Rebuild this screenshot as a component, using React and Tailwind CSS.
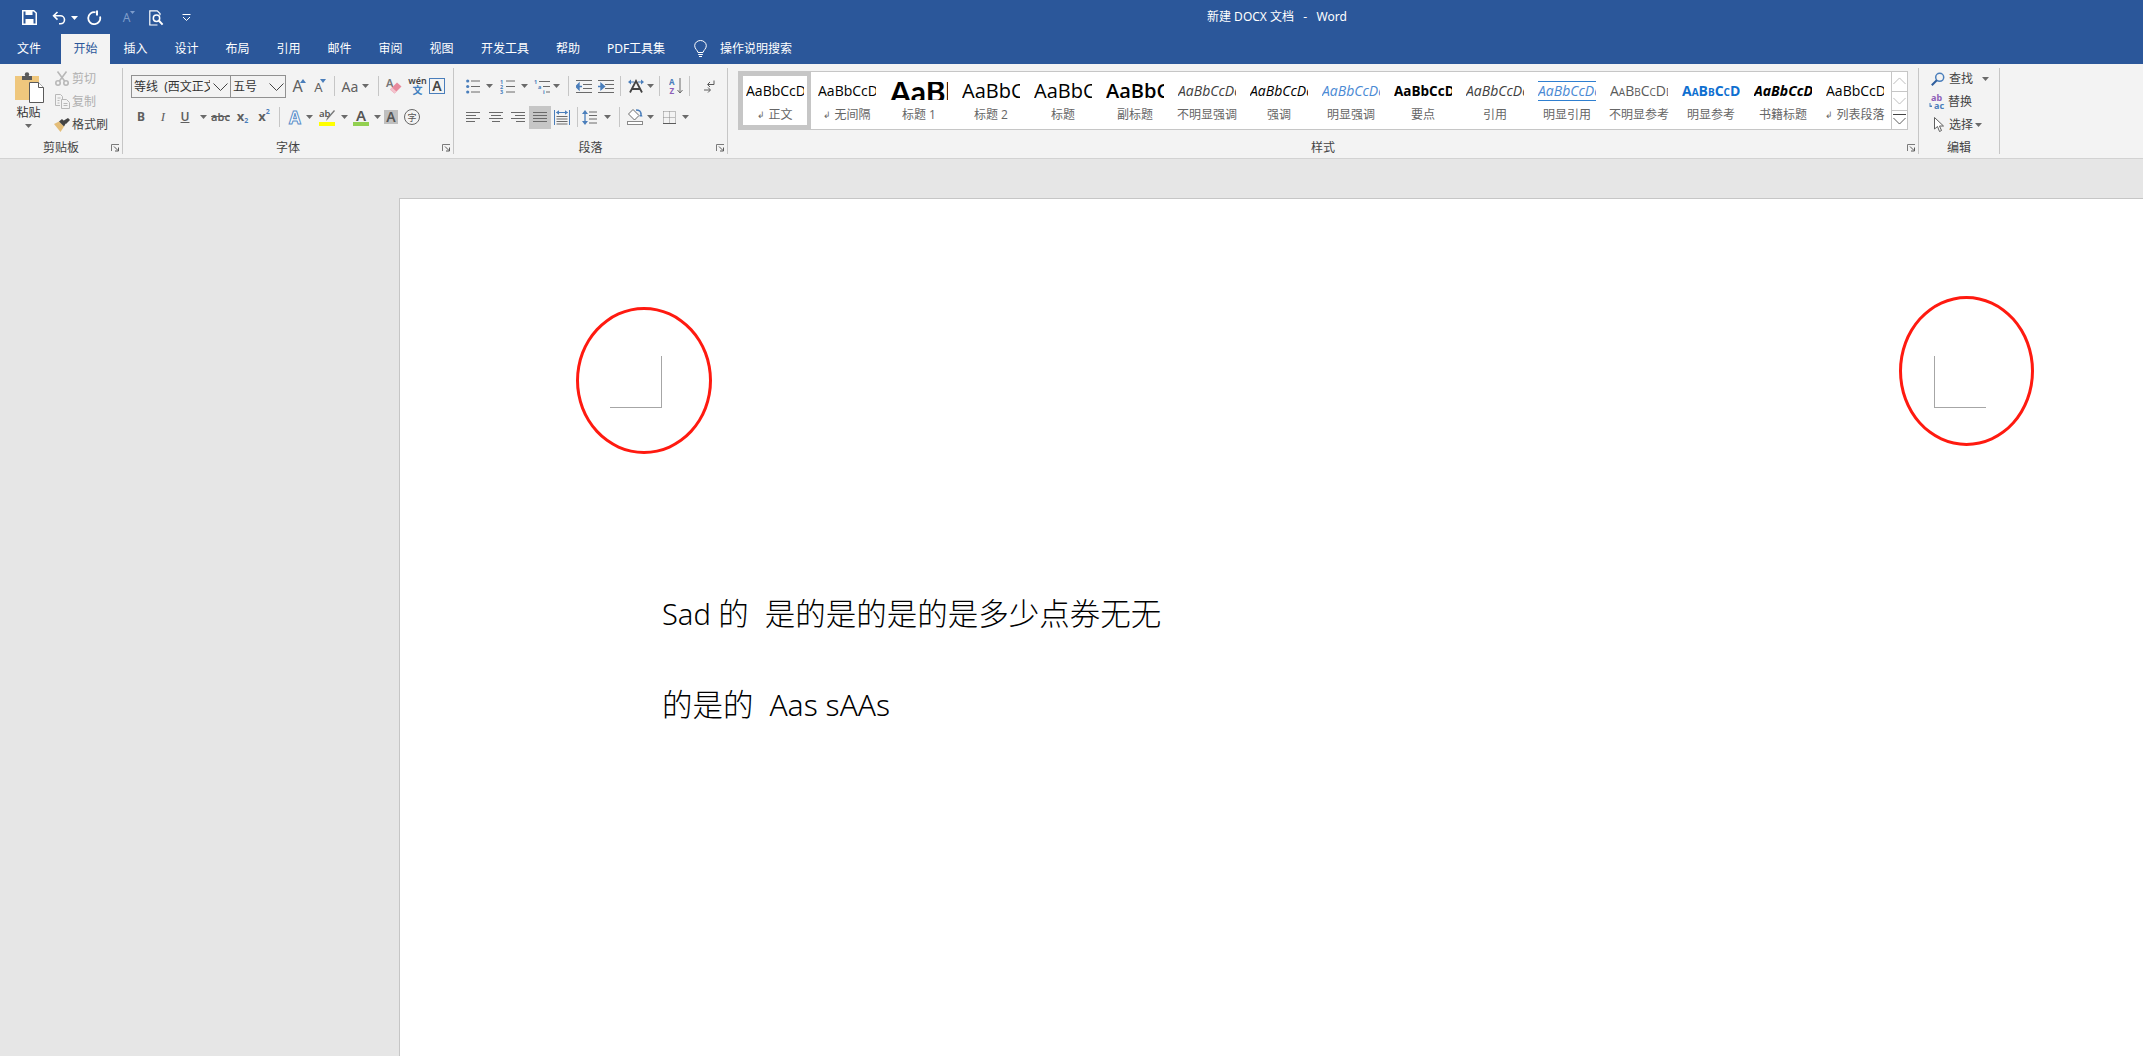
import React from 'react';

const BLUE = '#4a7ebb';

const C = ({ className = '', children }) => (
  <div className={`flex shrink-0 items-center justify-center ${className}`}>{children}</div>
);

const Caret = ({ color = '#6a6a6a' }) => (
  <svg width="7" height="4" viewBox="0 0 7 4" className="shrink-0"><path d="M0 0h7L3.5 4z" fill={color} /></svg>
);

const Sep = () => <div className="h-[20px] w-px bg-[#c6c6c6]" />;

const Launcher = () => (
  <svg width="9" height="8" viewBox="0 0 9 8" className="shrink-0">
    <path d="M.5 7V.5H8" fill="none" stroke="#7a7a7a" />
    <path d="M3 2.5L7 6.5M7.5 3.5v3.5H4" fill="none" stroke="#5a5a5a" />
  </svg>
);

const Chevron = ({ color = '#555', up = false, w = 15 }) => (
  <svg width={w} height="8" viewBox="0 0 15 8" className="shrink-0">
    <path d={up ? 'M.5 7.5L7.5.5l7 7' : 'M.5.5l7 7 7-7'} fill="none" stroke={color} />
  </svg>
);

/* quick access toolbar */
const SaveIcon = () => (
  <svg width="15" height="15" viewBox="0 0 15 15">
    <path d="M.75.75h11L14.25 3v11.25H.75z" fill="none" stroke="#fff" strokeWidth="1.5" />
    <rect x="3.5" y="1" width="7" height="4" fill="#fff" />
    <rect x="3.5" y="9" width="8" height="5" fill="#fff" />
  </svg>
);

const UndoIcon = () => (
  <svg width="15" height="14" viewBox="0 0 15 14" fill="none" stroke="#fff" strokeWidth="1.6">
    <path d="M5.5 1L1.6 4.8l3.9 3.8M2 4.8h6.5a4 4 0 0 1 0 8H7" />
  </svg>
);

const RedoIcon = () => (
  <svg width="15" height="15" viewBox="0 0 15 15" fill="none" stroke="#fff" strokeWidth="1.8">
    <path d="M8.5 2.3A6 6 0 1 0 13 6.5" />
    <path d="M10 .5v5" strokeWidth="2" />
  </svg>
);

const PreviewIcon = () => (
  <svg width="15" height="16" viewBox="0 0 15 16" fill="none" stroke="#fff" strokeWidth="1.2">
    <path d="M8.5 15H.8V.8h7.4L11 3.6v1.6" />
    <circle cx="7.5" cy="8.2" r="3.2" strokeWidth="1.5" />
    <path d="M10 10.8l3.6 3.8" strokeWidth="2" />
  </svg>
);

const CustomizeIcon = () => (
  <svg width="9" height="7" viewBox="0 0 9 7" fill="none" stroke="#fff">
    <path d="M.5.5h8" />
    <path d="M1 3l3.5 3.5L8 3" />
  </svg>
);

const BulbIcon = () => (
  <svg width="13" height="18" viewBox="0 0 13 18" fill="none" stroke="#fff">
    <path d="M4 12.5C3.5 10 .7 9 .7 5.7a5.8 5.2 0 0 1 11.6 0C12.3 9 9.5 10 9 12.5z" />
    <path d="M4.2 14.5h4.6M5 16.5h3" />
  </svg>
);

/* clipboard */
const PasteIcon = () => (
  <svg width="30" height="31" viewBox="0 0 30 31">
    <path d="M0 4h24v24H0z" fill="#efc77d" />
    <path d="M7 4h10v4H7z" fill="#5a5a5a" />
    <circle cx="12" cy="2.5" r="2.2" fill="#5a5a5a" />
    <path d="M14.5 10.5h9l5 5v15h-14z" fill="#fff" stroke="#5a5a5a" />
    <path d="M23.5 10.5v5h5" fill="#fff" stroke="#5a5a5a" />
  </svg>
);

const CutIcon = () => (
  <svg width="14" height="15" viewBox="0 0 14 15" fill="none" stroke="#b8b8b8" strokeWidth="1.6">
    <circle cx="3" cy="12" r="2.2" />
    <circle cx="11" cy="12" r="2.2" />
    <path d="M9.6 10L2.5.5M4.4 10L11.5.5" />
  </svg>
);

const CopyIcon = () => (
  <svg width="15" height="15" viewBox="0 0 15 15" fill="none" stroke="#b8b8b8">
    <path d="M5 11.5H.5V.5h5l2 2V5" />
    <path d="M6.5 5.5h5l3 3v6h-8z" />
    <path d="M2.5 4h3M2.5 6.5h2M2.5 9h2M8.5 9.5h4M8.5 11.5h4" />
  </svg>
);

const BrushIcon = () => (
  <svg width="16" height="14" viewBox="0 0 16 14">
    <path d="M0 6l5-2.5 5 5L6.5 14z" fill="#e4bd78" />
    <path d="M5 3.5L8 1l4 4-2 3.5z" fill="#444" />
    <path d="M9 3l5-3 2 2-4 4z" fill="#444" />
  </svg>
);

/* font */
const SmallTriangle = ({ down = false }) => (
  <svg width="6" height="4" viewBox="0 0 6 4" className="mb-[11px] -ml-[3px] shrink-0">
    <path d={down ? 'M0 0h6L3 4z' : 'M0 4h6L3 0z'} fill={BLUE} />
  </svg>
);

const EraserIcon = () => (
  <div className="flex h-[18px] w-[17px] items-start">
    <span className="text-[11px] leading-none font-semibold text-[#777]">A</span>
    <svg width="12" height="12" viewBox="0 0 12 12" className="mt-[5px] -ml-[3px] shrink-0">
      <path d="M0 7.5L7 .5 11.5 4.5l-7 7z" fill="#e8899c" />
      <path d="M0 7.5l2-2 4.5 4-2 2z" fill="#f3c3cd" />
    </svg>
  </div>
);

const PinyinIcon = () => (
  <div className="flex flex-col items-center leading-none">
    <span className="text-[9px] leading-[9px] font-semibold text-[#444]">wén</span>
    <span className="text-[10px] leading-[11px] font-semibold text-[#3f7fbf]">文</span>
  </div>
);

const GlowA = () => (
  <span className="text-[17px] leading-none font-bold text-white [-webkit-text-stroke:1px_#5b8fc9]">A</span>
);

const HighlightIcon = () => (
  <div className="flex flex-col items-center">
    <svg width="16" height="13" viewBox="0 0 16 13">
      <text x="0" y="8" fontSize="9.5" fontWeight="600" fill="#555">ab</text>
      <path d="M7 12l1-3 7-8 1 1-7 8z" fill="#777" />
    </svg>
    <div className="h-[4px] w-[16px] bg-[#ffff00]" />
  </div>
);

const FontColorIcon = () => (
  <div className="flex flex-col items-center">
    <span className="text-[15px] leading-[13px] font-semibold text-[#555]">A</span>
    <div className="h-[4px] w-[16px] bg-[#92d050]" />
  </div>
);

/* paragraph */
const Lines = ({ x = 5, w = 9, ys = [2, 7.5, 13], color = '#6a6a6a' }) => (
  <path d={ys.map((y) => `M${x} ${y}h${w}`).join('')} stroke={color} fill="none" />
);

const BulletsIcon = () => (
  <svg width="14" height="15" viewBox="0 0 14 15">
    <circle cx="1.7" cy="2" r="1.6" fill={BLUE} />
    <circle cx="1.7" cy="7.5" r="1.6" fill={BLUE} />
    <circle cx="1.7" cy="13" r="1.6" fill={BLUE} />
    <Lines />
  </svg>
);

const NumberIcon = () => (
  <svg width="15" height="15" viewBox="0 0 15 15">
    <text x="0" y="5" fontSize="5.5" fontWeight="700" fill={BLUE}>1</text>
    <text x="0" y="10" fontSize="5.5" fontWeight="700" fill={BLUE}>2</text>
    <text x="0" y="15" fontSize="5.5" fontWeight="700" fill={BLUE}>3</text>
    <Lines x={6} />
  </svg>
);

const MultiIcon = () => (
  <svg width="16" height="15" viewBox="0 0 16 15">
    <text x="0" y="5" fontSize="5.5" fontWeight="700" fill={BLUE}>1</text>
    <text x="4" y="10" fontSize="5.5" fontWeight="700" fill={BLUE}>a</text>
    <text x="9" y="15" fontSize="5.5" fontWeight="700" fill={BLUE}>i</text>
    <path d="M5 2.5h11M9 7.5h7M12 13h4" stroke="#6a6a6a" />
  </svg>
);

const IndentIcon = ({ inc = false }) => (
  <svg width="16" height="13" viewBox="0 0 16 13">
    <path d="M0 .5h16M7 4.5h9M7 8.5h9M0 12.5h16" stroke="#6a6a6a" />
    <path d={inc ? 'M0 6.5h3M3 3.5l3.5 3-3.5 3z' : 'M6 6.5H3M3 3.5L0 6.5l3 3z'} stroke={BLUE} strokeWidth="1.4" fill={BLUE} />
  </svg>
);

const AsianLayoutIcon = () => (
  <svg width="16" height="14" viewBox="0 0 16 14">
    <path d="M0 3l3-2.5v5zM16 3l-3-2.5v5z" fill={BLUE} />
    <path d="M3 3h3M10 3h3" stroke={BLUE} />
    <path d="M2 13.5L8 2l6 11.5M4.5 10h7" fill="none" stroke="#444" strokeWidth="1.8" />
  </svg>
);

const SortIcon = () => (
  <svg width="14" height="16" viewBox="0 0 14 16">
    <text x="0" y="7" fontSize="8" fontWeight="700" fill={BLUE}>A</text>
    <text x="0.5" y="15.5" fontSize="8" fontWeight="700" fill="#8e5fb8">Z</text>
    <path d="M11 0v15M8.5 12l2.5 3 2.5-3" fill="none" stroke="#6a6a6a" />
  </svg>
);

const MarksIcon = () => (
  <svg width="11" height="13" viewBox="0 0 11 13" fill="none">
    <path d="M10 .5v4H4M6 2L3.5 4.5 6 7" stroke="#5a5a5a" />
    <path d="M0 10h6M4 7.5L6.5 10 4 12.5" stroke="#5a5a5a" />
  </svg>
);

const AlignIcon = ({ rows }) => (
  <svg width="14" height="10" viewBox="0 0 14 10">
    <path d={rows} stroke="#6a6a6a" fill="none" />
  </svg>
);

const DistributeIcon = () => (
  <svg width="16" height="15" viewBox="0 0 16 15">
    <path d="M.5 0v15M15.5 0v15" stroke={BLUE} />
    <path d="M2.5 2.5h11" stroke={BLUE} />
    <path d="M2 2.5L5 .3v4.4zM14 2.5L11 .3v4.4z" fill={BLUE} />
    <path d="M2.5 6.5h11M2.5 9h11M2.5 11.5h11M2.5 14h11" stroke="#6a6a6a" />
  </svg>
);

const LineSpacingIcon = () => (
  <svg width="15" height="15" viewBox="0 0 15 15">
    <path d="M3 2v11" stroke={BLUE} strokeWidth="1.3" />
    <path d="M0 4l3-4 3 4zM0 11l3 4 3-4z" fill={BLUE} />
    <path d="M7 2h8M7 5.5h8M7 9h8M7 13h8" stroke="#6a6a6a" />
  </svg>
);

const ShadingIcon = () => (
  <svg width="16" height="16" viewBox="0 0 16 16">
    <path d="M6 .5l6 6-4.5 4.5-6-6z" fill="#fff" stroke="#6a6a6a" />
    <path d="M9 1c3 0 5 1.5 5 4" fill="none" stroke={BLUE} strokeWidth="1.4" />
    <path d="M14 3.5l1.5 4h-3z" fill={BLUE} />
    <rect x=".5" y="12.5" width="15" height="3" fill="#fff" stroke="#8a8a8a" />
  </svg>
);

const BordersIcon = () => (
  <svg width="13" height="13" viewBox="0 0 13 13">
    <path d="M.5.5h12M.5 6.5h12M.5.5v12M6.5.5v12M12.5.5v12" stroke="#8a8a8a" strokeDasharray="1 1" fill="none" />
    <path d="M0 12.5h13" stroke="#5a5a5a" />
  </svg>
);

/* editing */
const FindIcon = () => (
  <svg width="14" height="14" viewBox="0 0 14 14" fill="none">
    <circle cx="8.7" cy="5.3" r="4" stroke={BLUE} strokeWidth="1.5" />
    <path d="M5.8 8.2L.8 13.2" stroke="#2f5f9e" strokeWidth="2" />
  </svg>
);

const ReplaceIcon = () => (
  <svg width="16" height="15" viewBox="0 0 16 15">
    <text x="2" y="7" fontSize="9" fontWeight="700" fill="#8e5fb8">ab</text>
    <text x="5" y="15" fontSize="9" fontWeight="700" fill="#4a7ebb">ac</text>
    <path d="M1 9v3.5h2M2.5 11l-1.5 1.5" fill="none" stroke={BLUE} />
  </svg>
);

const CursorIcon = () => (
  <svg width="10" height="15" viewBox="0 0 10 15">
    <path d="M.5.5v11.5l3-2.5 2 5 2-1-2-4.5h4z" fill="#fff" stroke="#5f5f5f" />
  </svg>
);

const styles = [
  { preview: 'AaBbCcDd', cls: 'text-[14px] text-black', label: '正文', mark: true, selected: true },
  { preview: 'AaBbCcDd', cls: 'text-[14px] text-black', label: '无间隔', mark: true },
  { preview: 'AaBbCcDd', cls: "text-[30px] font-bold text-black [font-family:'Lato',sans-serif]", label: '标题 1' },
  { preview: 'AaBbCcDd', cls: 'text-[20px] text-black', label: '标题 2' },
  { preview: 'AaBbCcDd', cls: 'text-[20px] text-black', label: '标题' },
  { preview: 'AaBbCcDd', cls: 'text-[20px] font-semibold text-black', label: '副标题' },
  { preview: 'AaBbCcDd', cls: 'text-[14px] italic text-[#404040]', label: '不明显强调' },
  { preview: 'AaBbCcDd', cls: 'text-[14px] italic text-black', label: '强调' },
  { preview: 'AaBbCcDd', cls: 'text-[14px] italic text-[#4a8ad4]', label: '明显强调' },
  { preview: 'AaBbCcDd', cls: 'text-[13.5px] font-bold text-black', label: '要点' },
  { preview: 'AaBbCcDd', cls: 'text-[14px] italic text-[#404040]', label: '引用' },
  { preview: 'AaBbCcDd', cls: 'text-[14px] italic text-[#4a8ad4] border-y border-[#2f7fd0]', label: '明显引用' },
  { preview: 'AaBbCcDd', cls: 'text-[14px] text-[#5a5a5a] [font-variant:small-caps]', label: '不明显参考' },
  { preview: 'AaBbCcDd', cls: 'text-[14px] font-bold text-[#0f6fd0] [font-variant:small-caps]', label: '明显参考' },
  { preview: 'AaBbCcDd', cls: 'text-[14px] font-bold italic text-black', label: '书籍标题' },
  { preview: 'AaBbCcDd', cls: 'text-[14px] text-black', label: '列表段落', mark: true },
];

const StyleItem = ({ item }) => (
  <div className={`flex h-full w-[72px] shrink-0 flex-col items-center ${item.selected ? 'shadow-[inset_0_0_0_4px_#c6c6c6]' : ''}`}>
    <div className="flex h-[38px] w-[58px] items-center overflow-hidden">
      <span className={`block w-[58px] overflow-hidden leading-[18px] whitespace-nowrap ${item.cls}`}>{item.preview}</span>
    </div>
    <div className="flex h-[10px] items-center text-[12px] whitespace-nowrap text-[#666]">
      {item.mark && <span className="mr-[3px] text-[9px]">↲</span>}
      {item.label}
    </div>
  </div>
);

const Group = ({ className, label, launcher = true, children }) => (
  <div className={`flex h-[86px] shrink-0 flex-col justify-between border-r border-[#c6c6c6] ${className}`}>
    <div className="flex-1">{children}</div>
    <div className="grid h-[14px] grid-cols-[1fr_auto_1fr] items-center pt-[2px] text-[12px] leading-none text-[#444]">
      <span />
      <span>{label}</span>
      {launcher ? (
        <span className="flex justify-end pr-[2px]"><Launcher /></span>
      ) : <span />}
    </div>
  </div>
);

const tabs = [
  ['文件', 'w-[58px] mr-[3px]'],
  ['开始', 'w-[49px] bg-[#f3f3f3] text-[#2b579a]'],
  ['插入', 'w-[51px]'],
  ['设计', 'w-[51px]'],
  ['布局', 'w-[51px]'],
  ['引用', 'w-[51px]'],
  ['邮件', 'w-[51px]'],
  ['审阅', 'w-[51px]'],
  ['视图', 'w-[51px]'],
  ['开发工具', 'w-[76px]'],
  ['帮助', 'w-[50px]'],
  ['PDF工具集', 'w-[86px]'],
];

const SmallButton = ({ icon, label, dim = false }) => (
  <div className={`flex h-[20px] items-center text-[12px] ${dim ? 'text-[#b0b0b0]' : 'text-[#444]'}`}>
    <C className="w-[18px]">{icon}</C>
    <span className="ml-[1px] whitespace-nowrap">{label}</span>
  </div>
);

export default function App() {
  return (
    <div className="flex h-[1056px] w-[2143px] flex-col overflow-hidden bg-[#e6e6e6] [font-family:'Noto_Sans','Noto_Sans_CJK_SC',sans-serif]">
      {/* title bar */}
      <div className="flex h-[34px] shrink-0 items-center bg-[#2b579a] text-white">
        <div className="flex w-[1207px] shrink-0 items-center pt-[1px]">
          <C className="ml-[21px] w-[16px]"><SaveIcon /></C>
          <C className="ml-[14px] w-[16px]"><UndoIcon /></C>
          <C className="ml-[3px] w-[8px]"><Caret color="#fff" /></C>
          <C className="ml-[8px] w-[16px]"><RedoIcon /></C>
          <C className="ml-[19px] w-[16px]">
            <span className="text-[12px] leading-none text-[#7d9ccb]">A</span>
            <svg width="5" height="3" viewBox="0 0 5 3" className="mb-[11px] shrink-0"><path d="M0 0h5L2.5 3z" fill="#7d9ccb" /></svg>
          </C>
          <C className="ml-[11px] w-[16px]"><PreviewIcon /></C>
          <C className="ml-[17px] w-[10px]"><CustomizeIcon /></C>
        </div>
        <span className="text-[12px] whitespace-pre">新建 DOCX 文档   -   Word</span>
      </div>

      {/* tabs */}
      <div className="flex h-[30px] shrink-0 items-stretch bg-[#2b579a] text-[12px] text-white">
        {tabs.map(([name, cls]) => (
          <C key={name} className={cls}>{name}</C>
        ))}
        <C className="ml-[14px] w-[14px]"><BulbIcon /></C>
        <C className="ml-[13px]">操作说明搜索</C>
      </div>

      {/* ribbon */}
      <div className="flex h-[95px] shrink-0 items-center border-b border-[#d2d2d2] bg-[#f3f3f3] pb-px">
        <Group className="w-[123px]" label="剪贴板">
          <div className="flex">
            <div className="flex w-[53px] flex-col items-center pt-[4px] pl-[6px]">
              <PasteIcon />
              <span className="mt-[2px] -ml-[2px] text-[12px] leading-[16px] text-[#333]">粘贴</span>
              <div className="mt-[3px] -ml-[2px]"><Caret /></div>
            </div>
            <div className="flex flex-col gap-[3px] pt-[1px]">
              <SmallButton dim icon={<CutIcon />} label="剪切" />
              <SmallButton dim icon={<CopyIcon />} label="复制" />
              <SmallButton icon={<BrushIcon />} label="格式刷" />
            </div>
          </div>
        </Group>

        <Group className="w-[331px]" label="字体">
          <div className="mt-[7px] flex h-[23px] items-center pl-[8px]">
            <div className="flex h-[23px] w-[100px] shrink-0 items-center border border-[#919191] bg-[#f3f3f3] pt-[1px] pl-[2px] text-[12px] text-[#333]">
              <span className="w-[76px] overflow-hidden whitespace-pre">等线  (西文正文)</span>
              <span className="ml-[3px]"><Chevron color="#444" /></span>
            </div>
            <div className="-ml-px flex h-[23px] w-[56px] shrink-0 items-center border border-[#919191] pt-[1px] pl-[2px] text-[12px] text-[#333]">
              <span className="w-[35px]">五号</span>
              <span className="ml-[1px]"><Chevron color="#444" /></span>
            </div>
            <C className="ml-[5px] w-[16px] items-end"><span className="text-[16px] leading-none text-[#5f5f5f]">A</span><SmallTriangle /></C>
            <C className="ml-[6px] w-[14px] items-end"><span className="text-[13px] leading-none text-[#5f5f5f]">A</span><SmallTriangle down /></C>
            <C className="ml-[7px] w-px"><Sep /></C>
            <C className="ml-[7px] w-[16px] text-[14px] text-[#5f5f5f]">Aa</C>
            <C className="ml-[3px] w-[8px]"><Caret /></C>
            <C className="ml-[9px] w-px"><Sep /></C>
            <C className="ml-[7px] w-[17px]"><EraserIcon /></C>
            <C className="ml-[6px] w-[17px]"><PinyinIcon /></C>
            <C className="ml-[3px] h-[16px] w-[16px] border border-[#4a7ebb] text-[14px] leading-none font-semibold text-[#444]">A</C>
          </div>
          <div className="mt-[8px] flex h-[23px] items-center pl-[7px] text-[#5f5f5f]">
            <C className="w-[22px] text-[12px] font-bold">B</C>
            <C className="w-[22px] text-[13px] italic [font-family:'Liberation_Serif',serif]">I</C>
            <C className="w-[22px] text-[12px] font-semibold underline">U</C>
            <C className="w-[14px]"><Caret /></C>
            <C className="w-[21px] text-[11px] font-semibold line-through">abc</C>
            <C className="w-[23px] items-end text-[13px] font-bold">x<span className="text-[7px] text-[#4a7ebb]">2</span></C>
            <C className="w-[20px] items-start text-[13px] font-bold">x<span className="text-[7px] text-[#4a7ebb]">2</span></C>
            <C className="w-[10px]"><Sep /></C>
            <C className="w-[22px]"><GlowA /></C>
            <C className="w-[7px]"><Caret /></C>
            <C className="w-[28px]"><HighlightIcon /></C>
            <C className="w-[6px]"><Caret /></C>
            <C className="w-[28px]"><FontColorIcon /></C>
            <C className="w-[4px]"><Caret /></C>
            <C className="ml-[5px] h-[14px] w-[14px] bg-[#bfbfbf] text-[14px] leading-none font-semibold text-[#555]">A</C>
            <C className="ml-[6px] h-[16px] w-[16px] rounded-full border border-[#666] text-[9px] leading-none text-[#555]">字</C>
          </div>
        </Group>

        <Group className="w-[274px]" label="段落">
          <div className="mt-[7px] flex h-[23px] items-center pl-[11px]">
            <C className="w-[16px]"><BulletsIcon /></C>
            <C className="ml-[5px] w-[7px]"><Caret /></C>
            <C className="ml-[6px] w-[16px]"><NumberIcon /></C>
            <C className="ml-[6px] w-[7px]"><Caret /></C>
            <C className="ml-[6px] w-[16px]"><MultiIcon /></C>
            <C className="ml-[3px] w-[7px]"><Caret /></C>
            <C className="ml-[8px] w-px"><Sep /></C>
            <C className="ml-[7px] w-[16px]"><IndentIcon /></C>
            <C className="ml-[6px] w-[16px]"><IndentIcon inc /></C>
            <C className="ml-[6px] w-px"><Sep /></C>
            <C className="ml-[7px] w-[16px]"><AsianLayoutIcon /></C>
            <C className="ml-[3px] w-[7px]"><Caret /></C>
            <C className="ml-[5px] w-px"><Sep /></C>
            <C className="ml-[8px] w-[16px]"><SortIcon /></C>
            <C className="ml-[5px] w-px"><Sep /></C>
            <C className="ml-[14px] w-[11px]"><MarksIcon /></C>
          </div>
          <div className="mt-[8px] flex h-[23px] items-center pl-[11px]">
            <C className="w-[16px]"><AlignIcon rows="M0 .5h14M0 3.5h10M0 6.5h14M0 9.5h9" /></C>
            <C className="ml-[7px] w-[16px]"><AlignIcon rows="M0 .5h14M2 3.5h10M0 6.5h14M3 9.5h8" /></C>
            <C className="ml-[6px] w-[16px]"><AlignIcon rows="M0 .5h14M4 3.5h10M0 6.5h14M5 9.5h9" /></C>
            <C className="ml-[3px] h-[23px] w-[22px] bg-[#c6c6c6]"><AlignIcon rows="M0 .5h14M0 3.5h14M0 6.5h14M0 9.5h14" /></C>
            <C className="w-[22px]"><DistributeIcon /></C>
            <C className="ml-[4px] w-px"><Sep /></C>
            <C className="ml-[3px] w-[16px]"><LineSpacingIcon /></C>
            <C className="ml-[7px] w-[7px]"><Caret /></C>
            <C className="ml-[8px] w-px"><Sep /></C>
            <C className="ml-[7px] w-[16px]"><ShadingIcon /></C>
            <C className="ml-[4px] w-[7px]"><Caret /></C>
            <C className="ml-[7px] w-[16px]"><BordersIcon /></C>
            <C className="ml-[5px] w-[7px]"><Caret /></C>
          </div>
        </Group>

        <Group className="w-[1191px]" label="样式">
          <div className="mt-[3px] ml-[10px] flex h-[59px] w-[1170px] border border-[#c6c6c6] bg-white [font-family:'Open_Sans','Noto_Sans_CJK_SC',sans-serif]">
            {styles.map((item) => (
              <StyleItem key={item.label} item={item} />
            ))}
            <div className="flex w-[16px] shrink-0 flex-col border-l border-[#c6c6c6]">
              <C className="h-[20px] border-b border-[#c6c6c6]"><Chevron up color="#b4b4b4" w={13} /></C>
              <C className="h-[19px] border-b border-[#c6c6c6]"><Chevron color="#b4b4b4" w={13} /></C>
              <C className="flex-1 flex-col gap-[2px]">
                <div className="h-px w-[13px] bg-[#444]" />
                <Chevron color="#444" w={13} />
              </C>
            </div>
          </div>
        </Group>

        <Group className="w-[81px]" label="编辑" launcher={false}>
          <div className="flex flex-col gap-[3px] pt-[1px]">
            <div className="flex h-[20px] items-center pl-[12px] text-[12px] text-[#444]">
              <FindIcon />
              <span className="ml-[4px]">查找</span>
              <span className="ml-[9px]"><Caret /></span>
            </div>
            <div className="flex h-[20px] items-center pl-[10px] text-[12px] text-[#444]">
              <ReplaceIcon />
              <span className="ml-[3px]">替换</span>
            </div>
            <div className="flex h-[20px] items-center pl-[15px] text-[12px] text-[#444]">
              <CursorIcon />
              <span className="ml-[5px]">选择</span>
              <span className="ml-[2px]"><Caret /></span>
            </div>
          </div>
        </Group>
      </div>

      {/* document */}
      <div className="min-h-0 flex-1 pt-[39px] pl-[399px]">
        <div className="relative h-full border-t border-l border-[#c6c6c6] bg-white pt-[369px] pl-[262px] text-[30.5px] leading-[91px] font-light whitespace-pre text-black">
          <div><span className="text-[29px]">Sad </span>的  是的是的是的是多少点券无无</div>
          <div>的是的  <span className="text-[30px]">Aas sAAs</span></div>
          <div className="absolute top-[108px] left-[176px] h-[147px] w-[136px] rounded-[50%] border-[3px] border-[#ff1a10]" />
          <div className="absolute top-[157px] left-[210px] h-[52px] w-[52px] border-r border-b border-[#a6a6a6]" />
          <div className="absolute top-[97px] left-[1499px] h-[150px] w-[135px] rounded-[50%] border-[3px] border-[#ff1a10]" />
          <div className="absolute top-[157px] left-[1534px] h-[52px] w-[52px] border-b border-l border-[#a6a6a6]" />
        </div>
      </div>
    </div>
  );
}
